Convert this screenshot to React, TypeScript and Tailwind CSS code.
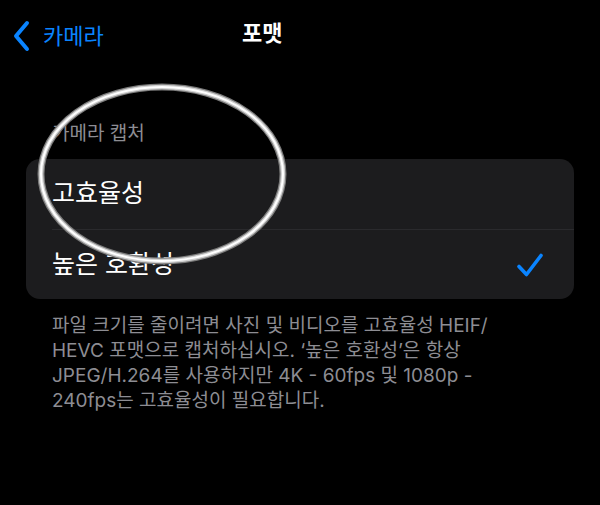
import React from 'react';

const font = { fontFamily: 'Inter, "Noto Sans CJK KR", sans-serif' };

const App: React.FC = () => {
  return (
    <div className="relative w-[600px] h-[505px] bg-black overflow-hidden text-white" style={font}>
      {/* Nav bar */}
      <div className="relative h-[70px]">
        <div className="absolute left-[13px] top-[20px] flex items-center">
          <svg width="18" height="32" viewBox="0 0 18 32" className="mr-[12px]">
            <path d="M14 3 L3 16 L14 29" fill="none" stroke="#0a84ff" strokeWidth="4" strokeLinecap="round" strokeLinejoin="round" />
          </svg>
          <span className="text-[22px] leading-none text-[#0a84ff]">카메라</span>
        </div>
        <div className="absolute left-[242px] top-[22px] text-[22px] leading-none font-semibold">포맷</div>
      </div>

      {/* Section header */}
      <div className="pl-[52px] pt-[54px] text-[19px] leading-none text-[#8d8d93]">카메라 캡처</div>

      {/* Card */}
      <div className="mx-[26px] mt-[16px] rounded-[14px] bg-[#1c1c1e]">
        <div className="h-[70px] flex items-center pl-[26px] text-[25px]">고효율성</div>
        <div className="ml-[26px] h-px bg-[#2a2a2d]" />
        <div className="h-[69px] flex items-center justify-between pl-[26px] pr-[30px] text-[25px]">
          <span>높은 호환성</span>
          <svg width="28" height="26" viewBox="0 0 28 26">
            <path d="M3 14.5 L10.5 22.5 L25 3.5" fill="none" stroke="#0a84ff" strokeWidth="3.6" strokeLinecap="round" strokeLinejoin="round" />
          </svg>
        </div>
      </div>

      {/* Footer */}
      <div className="pl-[52px] pr-[30px] pt-[14px] text-[19px] leading-[25px] text-[#8d8d93] whitespace-nowrap">
        파일 크기를 줄이려면 사진 및 비디오를 고효율성 HEIF/
        <br />
        HEVC 포맷으로 캡처하십시오. ‘높은 호환성’은 항상
        <br />
        JPEG/H.264를 사용하지만 4K - 60fps 및 1080p -
        <br />
        240fps는 고효율성이 필요합니다.
      </div>

      {/* Annotation ring */}
      <svg className="absolute left-0 top-0 pointer-events-none" width="600" height="505">
        <ellipse cx="162" cy="174" rx="121" ry="87" fill="none" stroke="#7a7a7a" strokeWidth="7" />
        <ellipse cx="162" cy="174" rx="121" ry="87" fill="none" stroke="#cfcfcf" strokeWidth="4.5" />
        <ellipse cx="162" cy="174" rx="121" ry="87" fill="none" stroke="#ffffff" strokeWidth="2" />
      </svg>
    </div>
  );
};

export default App;
